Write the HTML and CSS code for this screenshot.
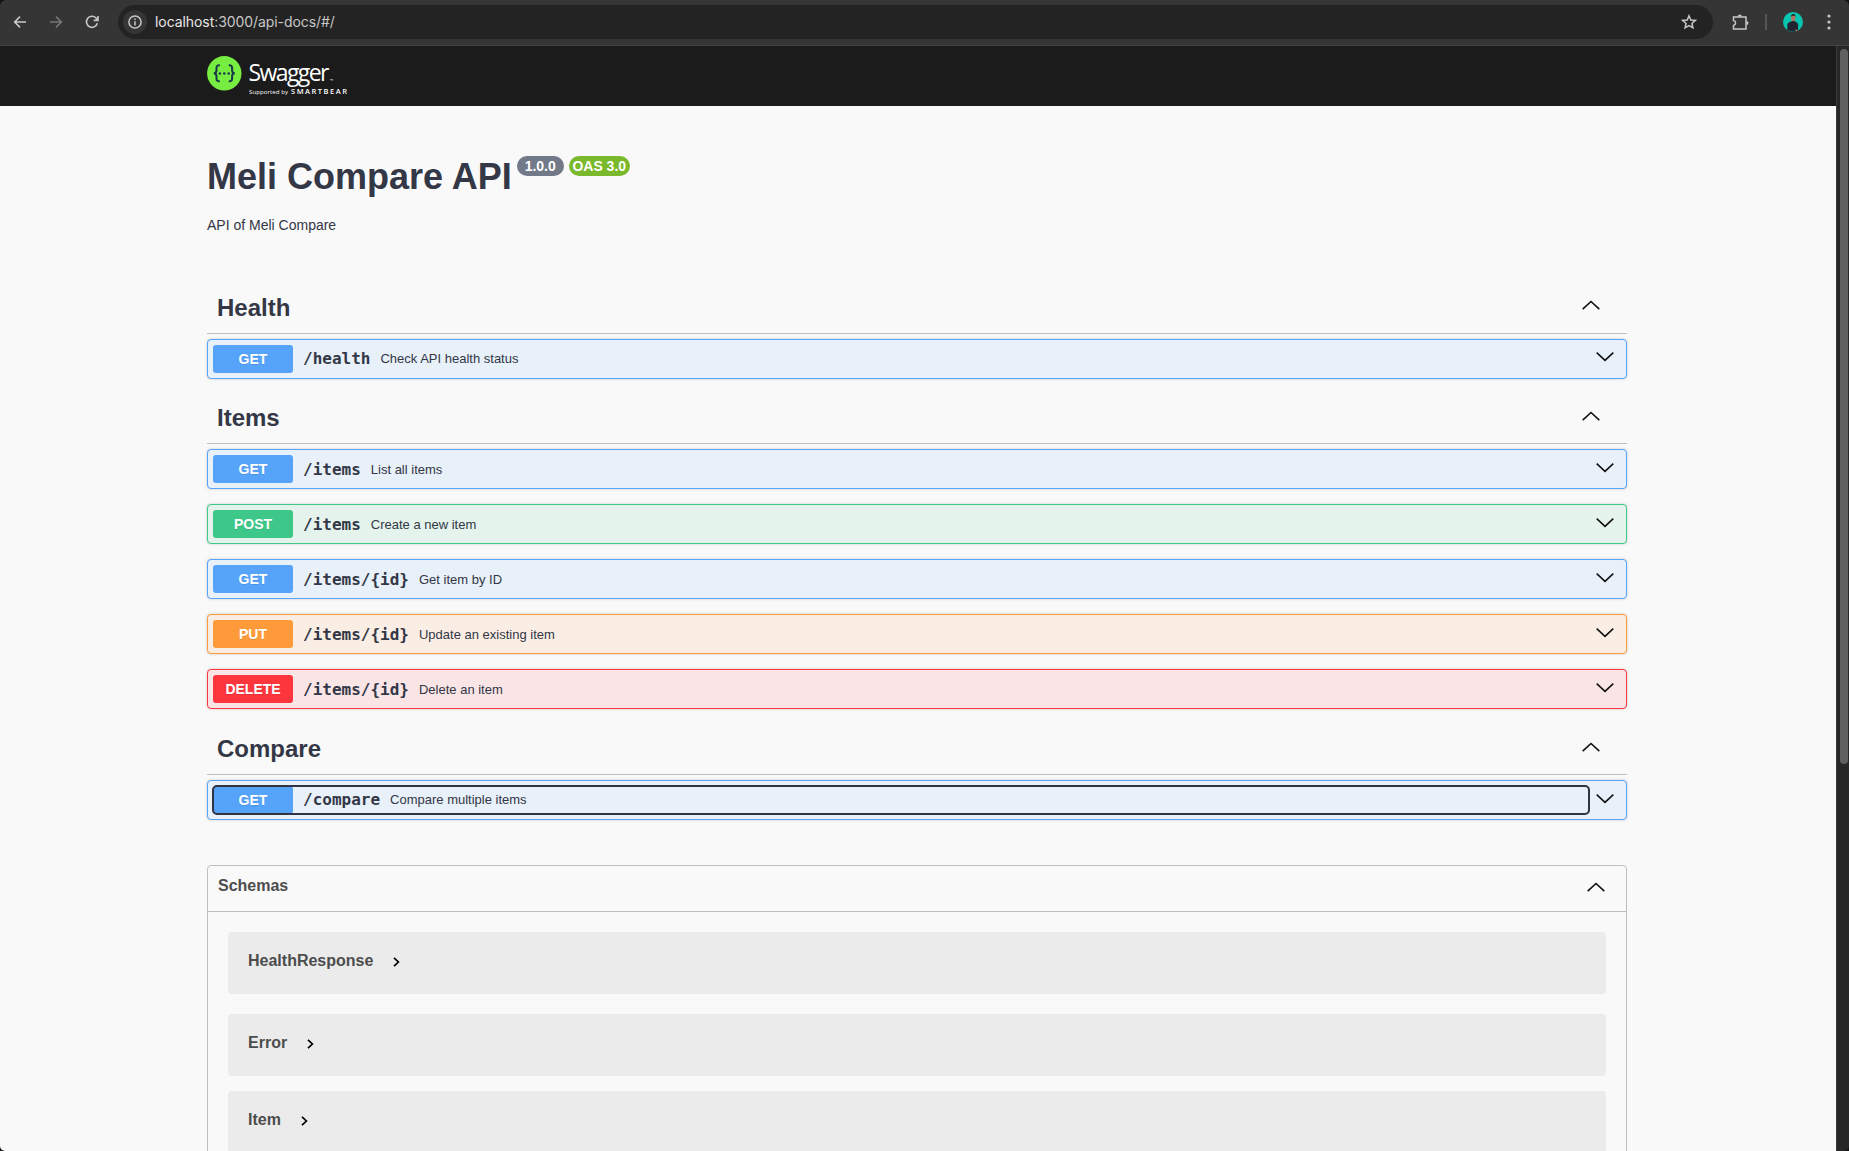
FILE: index.html
```html
<!DOCTYPE html>
<html lang="en">
<head>
<meta charset="utf-8">
<title>Swagger UI</title>
<link rel="stylesheet" href="styles.css">
</head>
<body>
<svg class="defs" aria-hidden="true">
  <symbol id="down" viewBox="0 0 18 10"><path d="M.7.6 9 8.300 17.300.6" fill="none" stroke="#111" stroke-width="1.6"/></symbol>
  <symbol id="up" viewBox="0 0 18 10"><path d="M.7 9.200 9 1.500l8.300 7.700" fill="none" stroke="#111" stroke-width="1.6"/></symbol>
  <symbol id="right" viewBox="0 0 7 10"><path d="M1 .8 5.400 5 1 9.200" fill="none" stroke="#000" stroke-width="1.7"/></symbol>
</svg>
<div class="window">
  <header class="toolbar">
    <svg class="ico back" viewBox="0 0 24 24"><path d="M21 12H4M12 4l-8 8 8 8"/></svg>
    <svg class="ico forward" viewBox="0 0 24 24"><path d="M3 12h17M12 4l8 8-8 8"/></svg>
    <svg class="ico reload" viewBox="0 0 24 24"><path d="M20 14a8.300 8.300 0 1 1-2-8l3 3M21 3v6.500h-6.500"/></svg>
    <div class="omnibox">
      <span class="info"><svg viewBox="0 0 14 14"><circle cx="7" cy="7" r="6.100"/><path d="M7 6.200v4.200M7 3.500v1.500"/></svg></span>
      <span class="url"><b>localhost</b>:3000/api-docs/#/</span>
      <svg class="star" viewBox="0 0 16 16"><path d="M8 1.800 9.800 6l4.500.4-3.400 3 1 4.400L8 11.500l-3.900 2.300 1-4.400-3.400-3L6.200 6z"/></svg>
    </div>
    <svg class="puzzle" viewBox="0 0 17 17"><path d="M1.500 3h12.500v12h-12.500v-3.600C4.300 10.800 4.300 7.200 1.500 6.600z"/><path class="knob" d="M5.800 2.500a2 2 0 0 1 4 0zM14.500 7a2 2 0 0 1 0 4z"/></svg>
    <span class="sep"></span>
    <svg class="avatar" viewBox="0 0 20 20"><circle cx="10" cy="10" r="10" fill="#08c4b0"/><path d="M4.300 18V12.800Q4.500 10.500 8.200 9.500L10.200 8.500 12.200 9.400Q15.300 10.500 15.200 13.500L14.800 18.800Q9.500 21 4.300 18z" fill="#202431"/><ellipse cx="10.200" cy="6" rx="2.200" ry="3.200" fill="#a87862"/><path d="M8 4.900Q7.900 1.900 10.300 1.900T12.400 4.900L11.600 3.700H8.800z" fill="#251d1c"/><path d="M12.500 17.500l2.500.8-1.200 1-1.800-.9z" fill="#b57b60"/></svg>
    <svg class="dots" viewBox="0 0 4 16"><circle cx="2" cy="2" r="1.600"/><circle cx="2" cy="8" r="1.600"/><circle cx="2" cy="14" r="1.600"/></svg>
  </header>
  <div class="viewport">
    <div class="page">
      <div class="topbar">
        <svg class="logo" viewBox="0 0 142 42">
          <circle cx="17.300" cy="17.300" r="17.200" fill="#77ed41"/>
          <g fill="none" stroke="#173647" stroke-width="2"><path d="M12.800 9.300q-3.300-.3-3.300 2.500v2.500q0 3-2.700 3 2.700 0 2.700 3v2.500q0 2.800 3.300 2.500M21.800 9.300q3.300-.3 3.300 2.500v2.500q0 3 2.700 3-2.700 0-2.700 3v2.500q0 2.800-3.300 2.500"/></g>
          <g fill="#173647"><circle cx="12.900" cy="17.400" r="1.250"/><circle cx="17.300" cy="17.400" r="1.250"/><circle cx="21.700" cy="17.400" r="1.250"/></g>
          <text class="brand" x="41.500" y="25" textLength="81">Swagger</text>
          <text class="tm" x="123" y="25.500">™</text>
          <text class="by" x="42" y="38" textLength="39">Supported by</text>
          <text class="bear" x="84" y="38" textLength="56">SMARTBEAR</text>
        </svg>
      </div>
      <main class="wrapper">
        <section class="info-block">
          <h1>Meli Compare API</h1>
          <span class="pill version">1.0.0</span><span class="pill oas">OAS 3.0</span>
        </section>
        <p class="desc">API of Meli Compare</p>

        <section class="tag health">
          <h2>Health <svg class="chev"><use href="#up"/></svg></h2>
          <div class="op get"><span class="summary"><b>GET</b><code>/health</code><span>Check API health status</span></span><svg class="chev"><use href="#down"/></svg></div>
        </section>
        <section class="tag items">
          <h2>Items <svg class="chev"><use href="#up"/></svg></h2>
          <div class="op get low"><span class="summary"><b>GET</b><code>/items</code><span>List all items</span></span><svg class="chev"><use href="#down"/></svg></div>
          <div class="op post low"><span class="summary"><b>POST</b><code>/items</code><span>Create a new item</span></span><svg class="chev"><use href="#down"/></svg></div>
          <div class="op get low"><span class="summary"><b>GET</b><code>/items/{id}</code><span>Get item by ID</span></span><svg class="chev"><use href="#down"/></svg></div>
          <div class="op put low"><span class="summary"><b>PUT</b><code>/items/{id}</code><span>Update an existing item</span></span><svg class="chev"><use href="#down"/></svg></div>
          <div class="op delete low"><span class="summary"><b>DELETE</b><code>/items/{id}</code><span>Delete an item</span></span><svg class="chev"><use href="#down"/></svg></div>
        </section>
        <section class="tag compare">
          <h2>Compare <svg class="chev"><use href="#up"/></svg></h2>
          <div class="op get low"><span class="summary focused"><b>GET</b><code>/compare</code><span>Compare multiple items</span></span><svg class="chev"><use href="#down"/></svg></div>
        </section>

        <section class="schemas">
          <h3>Schemas <svg class="chev"><use href="#up"/></svg></h3>
          <div class="models">
            <div class="model first">HealthResponse <svg><use href="#right"/></svg></div>
            <div class="model">Error <svg><use href="#right"/></svg></div>
            <div class="model">Item <svg><use href="#right"/></svg></div>
          </div>
        </section>
      </main>
    </div>
    <div class="scrollbar"><div class="thumb"></div></div>
  </div>
</div>
</body>
</html>
```

FILE: styles.css
```css
* { box-sizing: border-box; }
body { margin: 0; background: #111; font-family: "Liberation Sans", Arial, sans-serif; color: #333746; }
.defs { position: absolute; width: 0; height: 0; }
.window { height: 1151px; display: flex; flex-direction: column; overflow: hidden; border-radius: 6px 6px 5px 5px; }

.toolbar { flex: none; height: 46px; background: #353535; border-bottom: 1px solid #444; display: flex; align-items: center; padding: 0 14px 1px 12px; }
.toolbar svg { flex: none; fill: none; stroke: #c7c7c7; stroke-width: 1.5; }
.toolbar .ico { width: 16px; height: 16px; stroke-width: 2.4; }
.toolbar .forward { margin-left: 20px; stroke: #777; }
.toolbar .reload { margin-left: 20px; margin-right: 18px; }
.omnibox { width: 1595px; height: 34px; border-radius: 17px; background: #232323; display: flex; align-items: center; padding: 0 16px 0 5px; }
.info { width: 24px; height: 24px; border-radius: 50%; background: #353535; display: grid; place-items: center; }
.info svg { width: 14px; height: 14px; }
.url { margin-left: 8px; flex: 1; padding-bottom: 2px; font: 14px "Inter", sans-serif; letter-spacing: -.07px; color: #c7c7c7; }
.url b { font-weight: 400; color: #e8e8e8; }
.star { width: 16px; height: 16px; }
.puzzle { width: 17px; height: 17px; margin-left: 19px; }
.toolbar .puzzle .knob { fill: #c7c7c7; stroke: none; }
.sep { width: 2px; height: 16px; background: #555; margin: 0 16px 0 16px; }
.toolbar .avatar { width: 20px; height: 20px; stroke: none; }
.toolbar .dots { width: 4px; height: 16px; margin-left: auto; margin-right: 4px; fill: #c7c7c7; stroke: none; }

.viewport { flex: 1; min-height: 0; display: flex; }
.page { flex: 1; min-width: 0; background: #f9f9f9; overflow: hidden; }
.scrollbar { width: 13px; background: #272727; border-left: 1px solid #3a3a3a; padding: 3px 1px 0 3px; }
.thumb { width: 8px; height: 715px; border-radius: 4px; background: #606060; }

.topbar { height: 60px; background: #1b1b1b; padding: 10px 0 0 207px; }
.logo { display: block; width: 142px; height: 42px; fill: #fff; }
.brand { font: 23px "Open Sans", sans-serif; font-weight: 400; }
.tm { font: 4px "Open Sans", sans-serif; }
.by { font: 6px "Open Sans", sans-serif; }
.bear { font: 600 7.500px "Open Sans", sans-serif; }

.wrapper { width: 1420px; margin-left: 207px; }
.info-block { display: flex; align-items: flex-start; padding-top: 50px; height: 103px; }
h1 { margin: 0; font-size: 36px; line-height: 41px; white-space: nowrap; }
.pill { height: 20px; border-radius: 10px; color: #fff; font-weight: 700; font-size: 14px; line-height: 20px; text-align: center; }
.version { width: 47px; margin-left: 5px; background: #727988; }
.oas { width: 61px; margin-left: 5px; background: #7ab92b; }
.desc { margin: 0; height: 74px; font-size: 14px; line-height: 32px; }

.tag h2 { margin: 0 0 5px; height: 51px; padding: 0 27px 1px 10px; border-bottom: 1px solid #bfbfbf; font-size: 24px; line-height: 48px; display: flex; justify-content: space-between; align-items: center; }
.chev { flex: none; width: 18px; height: 10px; margin-top: -5px; }
.items h2 .chev { margin-top: -3px; }
.compare h2 .chev { margin-top: -4px; }
.tag { padding-bottom: 14px; }
.tag.items { padding-bottom: 15px; }
.op { height: 40px; border: 1px solid; border-radius: 4px; box-shadow: 0 0 3px rgba(0,0,0,.19); display: flex; align-items: center; padding: 0 12px 0 5px; margin-bottom: 15px; }
.tag .op:last-child { margin-bottom: 0; }
.summary { width: 1376px; height: 28px; display: flex; align-items: center; border-radius: 4px; }
.op .chev { margin-left: auto; margin-top: -4px; }
.op.low .chev { margin-top: -2px; }
.summary b { width: 80px; height: 28px; border-radius: 3px; color: #fff; font-size: 14px; line-height: 28px; text-align: center; text-shadow: 0 1px 0 rgba(0,0,0,.1); }
.summary code { margin: 0 10px; font: 700 16px "DejaVu Sans Mono", monospace; }
.summary span { font-size: 13px; }
.health .summary code, .health .summary span,
.compare .summary code, .compare .summary span { padding-bottom: 2px; }
.focused { outline: 2px solid #303342; outline-offset: -1px; }
.get { border-color: #56a3fa; background: #e8f0fa; }
.get b { background: #56a3fa; }
.post { border-color: #3dc88a; background: #e4f4ec; }
.post b { background: #3dc88a; }
.put { border-color: #fe9a39; background: #faeee4; }
.put b { background: #fe9a39; }
.delete { border-color: #fd353d; background: #fae5e6; }
.delete b { background: #fd353d; }

.schemas { margin-top: 31px; border: 1px solid #bfbfbf; border-radius: 4px; color: #4d4d4d; }
h3 { margin: 0; height: 46px; border-bottom: 1px solid #bfbfbf; padding: 0 21px 0 10px; font-size: 16px; line-height: 39px; display: flex; justify-content: space-between; }
h3 .chev { margin-top: 16px; }
.models { padding: 20px; }
.model { height: 62px; margin-bottom: 15px; border-radius: 4px; background: #ebebeb; font-weight: 700; font-size: 16px; line-height: 57px; padding-left: 20px; display: flex; }
.model.first { margin-bottom: 20px; }
.model svg { width: 7px; height: 10px; margin: 25px 0 0 20px; }
```
